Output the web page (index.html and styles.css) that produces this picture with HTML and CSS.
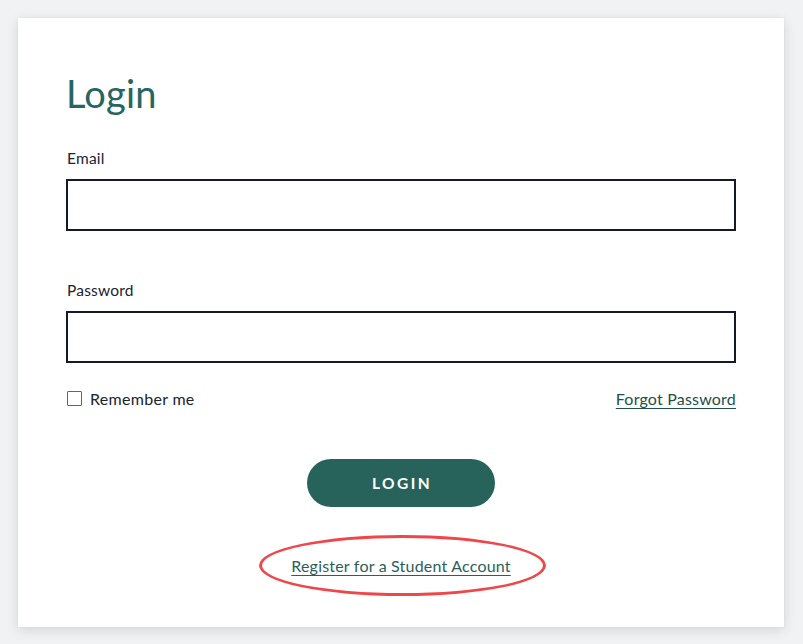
FILE: index.html
```html
<!DOCTYPE html>
<html>
<head>
<meta charset="utf-8">
<link rel="stylesheet" href="styles.css">
</head>
<body>
<main class="card">
  <h1 class="title">Login</h1>
  <form class="form">
    <div class="field">
      <label class="label">Email</label>
      <div class="input"></div>
    </div>
    <div class="field">
      <label class="label">Password</label>
      <div class="input"></div>
    </div>
    <div class="row">
      <label class="remember"><span class="checkbox"></span>Remember me</label>
      <a class="link">Forgot Password</a>
    </div>
    <div class="actions">
      <button type="button" class="btn">LOGIN</button>
    </div>
    <div class="register">
      <span class="register-wrap">
        <a class="link register-link">Register for a Student Account</a>
        <span class="circle"></span>
      </span>
    </div>
  </form>
</main>
</body>
</html>
```
FILE: styles.css
```css
html, body {
  margin: 0;
  padding: 0;
  background: #f1f2f4;
  font-family: "Lato", "Noto Sans", sans-serif;
  color: #1b2230;
}
body {
  padding: 18px 19px 17px 18px;
}
.card {
  background: #fff;
  height: 609px;
  box-sizing: border-box;
  padding: 52px 48px 0 48px;
  box-shadow: 0 3px 12px rgba(0,0,0,0.12), 0 0 2px rgba(0,0,0,0.06);
}
.title {
  margin: 0;
  font-weight: 400;
  font-size: 38px;
  line-height: 46px;
  color: #276560;
  padding-left: 0;
  letter-spacing: 0.2px;
}
.form {
  margin-top: 32px;
  display: flex;
  flex-direction: column;
}
.field {
  display: flex;
  flex-direction: column;
}
.field + .field {
  margin-top: 49px;
}
.label {
  font-size: 15.5px;
  line-height: 20px;
  letter-spacing: 0.2px;
  padding-left: 1px;
}
.input {
  margin-top: 11px;
  height: 52px;
  box-sizing: border-box;
  border: 2px solid #141a26;
}
.row {
  margin-top: 26px;
  display: flex;
  justify-content: space-between;
  align-items: center;
  height: 18px;
}
.remember {
  display: flex;
  align-items: center;
  font-size: 16px;
  letter-spacing: 0.3px;
  gap: 8px;
  padding-left: 1px;
}
.checkbox {
  width: 15px;
  height: 15px;
  box-sizing: border-box;
  border: 1px solid #5f6673;
  border-radius: 1px;
}
.link {
  color: #21504c;
  text-decoration: underline;
  font-size: 16px;
  letter-spacing: 0.2px;
  text-underline-offset: 3px;
}
.actions {
  margin-top: 52px;
  display: flex;
  justify-content: center;
}
.btn {
  width: 188px;
  height: 48px;
  border: none;
  border-radius: 24px;
  background: #27635b;
  color: #fff;
  font-family: inherit;
  font-weight: 700;
  font-size: 15.5px;
  letter-spacing: 2.4px;
  padding: 0 0 0 2px;
}
.register {
  margin-top: 49px;
  display: flex;
  justify-content: center;
}
.register-wrap {
  position: relative;
  display: inline-block;
  line-height: 20px;
}
.register-link {
  color: #2a5f5a;
}
.circle {
  position: absolute;
  left: -32px;
  right: -35px;
  top: -21px;
  bottom: -20px;
  border: 3px solid #f0464a;
  border-radius: 50%;
}
```
